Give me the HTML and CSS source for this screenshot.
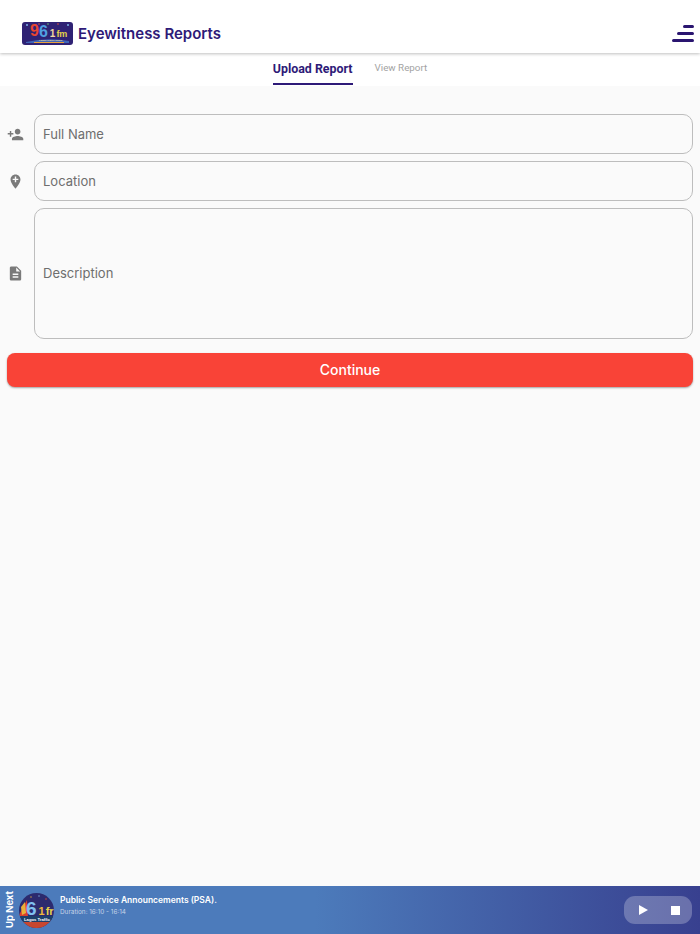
FILE: index.html
```html
<!DOCTYPE html>
<html>
<head>
    <title>Eyewitness Reports</title>
    <meta charset="UTF-8">
    <link rel="stylesheet" href="styles.css">
</head>
<body>
    <div class="page">
        <header class="top-bar">
            <div class="brand">
                <svg class="brand-logo" width="51" height="23" viewBox="0 0 51 23">
                    <rect width="51" height="23" rx="3" fill="#2f2274"/>
                    <path d="M4 20 Q26 15 47 19 L47 21 L4 21 Z" fill="#3f66b8"/>
                    <path d="M12 20.5 H42" stroke="#e9a13a" stroke-width="1"/>
                    <circle cx="5" cy="3" r="1" fill="#7fb4e6"/>
                    <circle cx="17" cy="2" r=".8" fill="#e8503a"/>
                    <circle cx="26" cy="2" r=".8" fill="#6cc070"/>
                    <circle cx="36" cy="2" r=".8" fill="#e8503a"/>
                    <circle cx="46" cy="3" r="1" fill="#7fb4e6"/>
                    <text class="logo-big" x="8" y="14">9<tspan class="logo-blue" dy="1">6</tspan><tspan class="logo-yellow" dx="2" dy="0">1</tspan><tspan class="logo-small" dx="1">fm</tspan></text>
                    <text class="logo-tag" x="17" y="19">Lagos Traffic Radio</text>
                </svg>
                <span class="brand-title">Eyewitness Reports</span>
            </div>
            <div class="menu-icon">
                <span class="menu-line line-short"></span>
                <span class="menu-line line-mid"></span>
                <span class="menu-line line-long"></span>
            </div>
        </header>

        <nav class="tabs">
            <div class="tab tab-active">Upload Report</div>
            <div class="tab">View Report</div>
        </nav>

        <main class="form">
            <div class="form-row">
                <svg class="field-icon" viewBox="0 0 24 24"><path d="M15 12c2.21 0 4-1.79 4-4s-1.79-4-4-4-4 1.79-4 4 1.79 4 4 4zm-9-2V7H4v3H1v2h3v3h2v-3h3v-2H6zm9 4c-2.67 0-8 1.34-8 4v2h16v-2c0-2.66-5.33-4-8-4z"/></svg>
                <div class="field field-line">Full Name</div>
            </div>
            <div class="form-row">
                <svg class="field-icon" viewBox="0 0 24 24"><path d="M12 2C8.14 2 5 5.14 5 9c0 5.25 7 13 7 13s7-7.75 7-13c0-3.86-3.14-7-7-7zm4 8h-3v3h-2v-3H8V8h3V5h2v3h3v2z"/></svg>
                <div class="field field-line">Location</div>
            </div>
            <div class="form-row">
                <svg class="field-icon" viewBox="0 0 24 24"><path d="M14 2H6c-1.1 0-2 .9-2 2v16c0 1.1.9 2 2 2h12c1.1 0 2-.9 2-2V8l-6-6zm2 16H8v-2h8v2zm0-4H8v-2h8v2zm-3-5V3.5L18.5 9H13z"/></svg>
                <div class="field field-area">Description</div>
            </div>
            <button class="continue-btn">Continue</button>
        </main>

        <footer class="player">
            <div class="up-next"><span>Up Next</span></div>
            <svg class="show-logo" width="35" height="35" viewBox="0 0 35 35">
                <defs>
                    <clipPath id="show-clip"><circle cx="17.5" cy="17.5" r="17.5"/></clipPath>
                </defs>
                <g clip-path="url(#show-clip)">
                    <rect width="35" height="35" fill="#2c2a6e"/>
                    <path d="M0 22 L8 7 L9 24 L0 24 Z" fill="#d8402f"/>
                    <path d="M2 14 L6 9 L7 20 L3 22 Z" fill="#e9b13a"/>
                    <path d="M0 28 H35 V35 H0 Z" fill="#c8472f"/>
                    <path d="M0 23 H35 V29 H0 Z" fill="#1d3f6a"/>
                    <circle cx="12" cy="4" r=".7" fill="#e9b13a"/>
                    <circle cx="20" cy="3" r=".7" fill="#7fb4e6"/>
                    <circle cx="27" cy="6" r=".7" fill="#e8503a"/>
                    <text class="show-six" x="7" y="22">6<tspan class="show-one" dx="2">1</tspan><tspan class="show-fm" dx="1">fr</tspan></text>
                    <text class="show-tag" x="5" y="27.5">Lagos Traffic</text>
                </g>
            </svg>
            <div class="now-info">
                <div class="now-title">Public Service Announcements (PSA).</div>
                <div class="now-time">Duration: 16:10 - 16:14</div>
            </div>
            <div class="controls">
                <svg width="9" height="10" viewBox="0 0 9 10"><path d="M0 0 L9 5 L0 10 Z" fill="#fff"/></svg>
                <span class="stop-icon"></span>
            </div>
        </footer>
    </div>
</body>
</html>
```

FILE: styles.css
```css
* {
    box-sizing: border-box;
}

body {
    margin: 0;
    font-family: Inter, "Liberation Sans", sans-serif;
    background-color: #fafafa;
}

.page {
    display: flex;
    flex-direction: column;
    height: 934px;
    overflow: hidden;
}

/* header */
.top-bar {
    display: flex;
    align-items: flex-end;
    justify-content: space-between;
    height: 53px;
    padding: 0 6px 8px 22px;
    background: #fff;
    box-shadow: 0 1px 3px rgba(0, 0, 0, 0.25);
    position: relative;
}

.brand {
    display: flex;
    align-items: center;
    gap: 5px;
}

.brand-logo {
    display: block;
}

.logo-big {
    font-family: "Liberation Sans", sans-serif;
    font-size: 16px;
    font-weight: 700;
    fill: #e8452f;
}

.logo-blue {
    fill: #4f9fe0;
}

.logo-yellow {
    fill: #f0d9a0;
    font-size: 10px;
}

.logo-small {
    font-size: 9px;
    fill: #e6d24a;
}

.logo-tag {
    font-family: "Liberation Sans", sans-serif;
    font-size: 2.5px;
    font-weight: 700;
    fill: #e8d9a0;
}

.brand-title {
    font-size: 15px;
    font-weight: 600;
    color: #2e1a78;
    line-height: 23px;
}

.menu-icon {
    display: flex;
    flex-direction: column;
    align-items: flex-end;
    gap: 4px;
    width: 22px;
    margin-bottom: 3px;
}

.menu-line {
    display: block;
    height: 3px;
    border-radius: 2px;
    background: #2a1570;
}

.line-short {
    width: 11px;
}

.line-mid {
    width: 17px;
}

.line-long {
    width: 22px;
}

/* tabs */
.tabs {
    display: flex;
    justify-content: center;
    gap: 22px;
    height: 33px;
    background: #fff;
}

.tab {
    height: 32px;
    padding-top: 8px;
    font-family: Roboto, sans-serif;
    font-size: 9.8px;
    line-height: 14px;
    color: #a3a3a3;
}

.tab-active {
    padding-top: 9px;
    font-size: 12.4px;
    font-weight: 700;
    color: #2e1a78;
    border-bottom: 2px solid #2e1a78;
}

/* form */
.form {
    flex: 1;
    display: flex;
    flex-direction: column;
    gap: 7px;
    padding: 28px 7px 0;
}

.form-row {
    display: flex;
    align-items: center;
    gap: 10px;
}

.field-icon {
    flex: none;
    width: 17px;
    height: 17px;
    fill: #7a7a7a;
}

.field {
    flex: 1;
    display: flex;
    align-items: center;
    padding: 0 8px 1px;
    border: 1px solid #bdbdbd;
    border-radius: 10px;
    font-size: 13px;
    color: #6e6e6e;
}

.field-line {
    height: 40px;
}

.field-area {
    height: 131px;
}

.continue-btn {
    height: 34px;
    margin-top: 7px;
    padding: 0 0 2px;
    border: none;
    border-radius: 8px;
    background: #f94337;
    box-shadow: 0 1px 2px rgba(0, 0, 0, 0.35);
    color: #fff;
    font-family: Inter, sans-serif;
    font-size: 14px;
    font-weight: 500;
}

/* bottom player */
.player {
    display: flex;
    align-items: center;
    height: 48px;
    padding-right: 8px;
    background: linear-gradient(90deg, #4c7bbb 0%, #4c7bbb 45%, #38408f 100%);
    color: #fff;
}

.up-next {
    display: flex;
    align-items: center;
    justify-content: center;
    width: 19px;
    height: 48px;
}

.up-next span {
    writing-mode: vertical-rl;
    transform: rotate(180deg);
    font-size: 9.5px;
    font-weight: 700;
}

.show-logo {
    flex: none;
    display: block;
}

.show-six {
    font-family: "Liberation Sans", sans-serif;
    font-size: 19px;
    font-weight: 700;
    fill: #7fc0f0;
}

.show-one {
    font-size: 11px;
    fill: #f0b93a;
}

.show-fm {
    font-size: 11px;
    fill: #e6d24a;
}

.show-tag {
    font-family: "Liberation Sans", sans-serif;
    font-size: 4.2px;
    font-weight: 700;
    fill: #fff;
}

.now-info {
    flex: 1;
    padding: 0 0 10px 6px;
}

.now-title {
    font-size: 8.5px;
    font-weight: 600;
    line-height: 12px;
}

.now-time {
    margin-top: 2px;
    font-size: 6.4px;
    line-height: 9px;
    color: #c5d3e8;
}

.controls {
    display: flex;
    align-items: center;
    justify-content: space-between;
    width: 68px;
    height: 28px;
    padding: 0 12px 0 15px;
    border-radius: 11px;
    background: rgba(255, 255, 255, 0.25);
}

.stop-icon {
    display: block;
    width: 9px;
    height: 9px;
    background: #fff;
}
```
